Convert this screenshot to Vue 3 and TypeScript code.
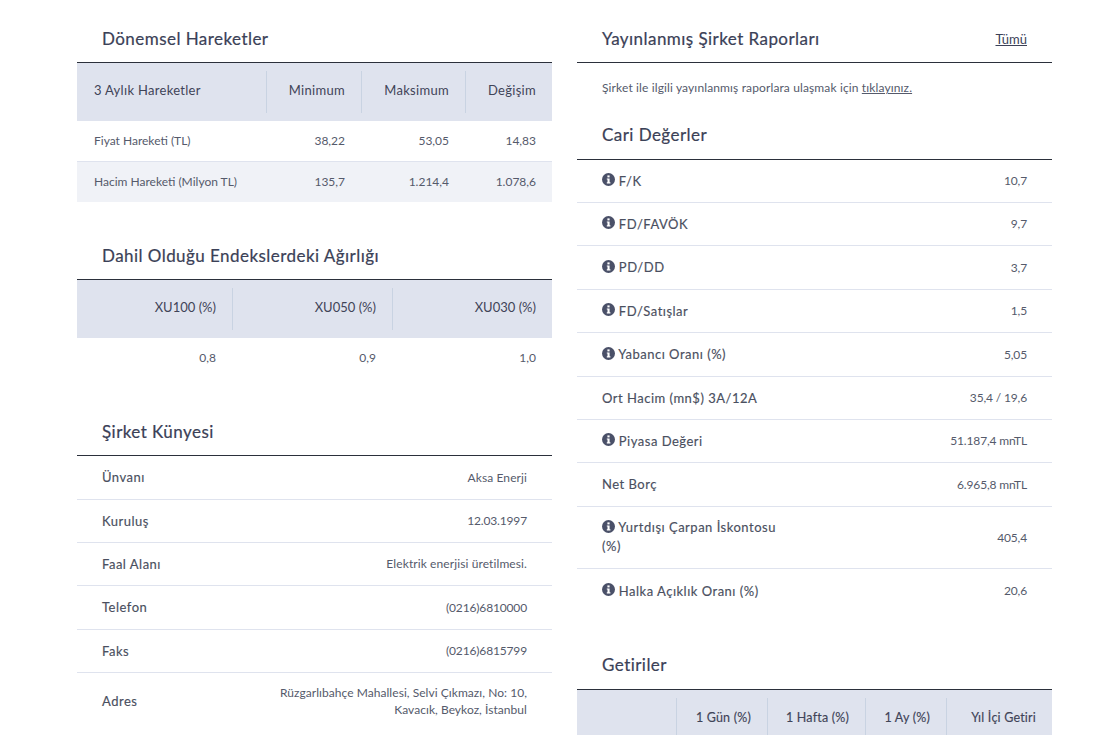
<script setup lang="ts">
const moves = [
  ['Fiyat Hareketi (TL)', '38,22', '53,05', '14,83'],
  ['Hacim Hareketi (Milyon TL)', '135,7', '1.214,4', '1.078,6'],
]
const identity = [
  { k: 'Ünvanı', v: 'Aksa Enerji', h: 44, txt: true },
  { k: 'Kuruluş', v: '12.03.1997', h: 43, txt: false },
  { k: 'Faal Alanı', v: 'Elektrik enerjisi üretilmesi.', h: 43, txt: true },
  { k: 'Telefon', v: '(0216)6810000', h: 44, txt: false },
  { k: 'Faks', v: '(0216)6815799', h: 43, txt: false },
]
const current = [
  { k: 'F/K', v: '10,7', i: true, h: 43 },
  { k: 'FD/FAVÖK', v: '9,7', i: true, h: 43 },
  { k: 'PD/DD', v: '3,7', i: true, h: 44 },
  { k: 'FD/Satışlar', v: '1,5', i: true, h: 43 },
  { k: 'Yabancı Oranı (%)', v: '5,05', i: true, h: 44 },
  { k: 'Ort Hacim (mn$) 3A/12A', v: '35,4 / 19,6', i: false, h: 43 },
  { k: 'Piyasa Değeri', v: '51.187,4 mnTL', i: true, h: 43 },
  { k: 'Net Borç', v: '6.965,8 mnTL', i: false, h: 44 },
]
</script>

<template>
  <div class="page">
    <div class="col">
      <h2 class="title">Dönemsel Hareketler</h2>
      <div class="thead moves">
        <div class="th left">3 Aylık Hareketler</div>
        <div class="th">Minimum</div>
        <div class="th">Maksimum</div>
        <div class="th last">Değişim</div>
      </div>
      <div v-for="r in moves" :key="r[0]" class="trow moves">
        <div class="td left">{{ r[0] }}</div>
        <div class="td">{{ r[1] }}</div>
        <div class="td">{{ r[2] }}</div>
        <div class="td last">{{ r[3] }}</div>
      </div>

      <h2 class="title second">Dahil Olduğu Endekslerdeki Ağırlığı</h2>
      <div class="thead weights">
        <div class="th">XU100 (%)</div>
        <div class="th">XU050 (%)</div>
        <div class="th last">XU030 (%)</div>
      </div>
      <div class="trow weights plain">
        <div class="td">0,8</div>
        <div class="td">0,9</div>
        <div class="td last">1,0</div>
      </div>

      <h2 class="title third">Şirket Künyesi</h2>
      <div v-for="r in identity" :key="r.k" class="kv" :style="{ height: r.h + 'px' }">
        <span class="key">{{ r.k }}</span>
        <span class="val" :class="{ txt: r.txt }">{{ r.v }}</span>
      </div>
      <div class="kv address">
        <span class="key">Adres</span>
        <span class="val addr">Rüzgarlıbahçe Mahallesi, Selvi Çıkmazı, No: 10, Kavacık, Beykoz, İstanbul</span>
      </div>
    </div>

    <div class="col">
      <div class="title split">
        <h2>Yayınlanmış Şirket Raporları</h2>
        <a class="all">Tümü</a>
      </div>
      <p class="note">Şirket ile ilgili yayınlanmış raporlara ulaşmak için <a>tıklayınız.</a></p>
      <h2 class="title cari">Cari Değerler</h2>
      <div v-for="r in current" :key="r.k" class="kv" :style="{ height: r.h + 'px' }">
        <span class="key">
          <svg v-if="r.i" class="info" viewBox="0 0 13 13" aria-hidden="true">
            <circle cx="6.5" cy="6.5" r="6.5" fill="#4a5068" />
            <rect x="5.4" y="2.4" width="2.2" height="2" fill="#fff" />
            <path d="M4.8 5.4h2.8v3.9h.8v1.2H4.8V9.3h.7V6.6h-.7z" fill="#fff" />
          </svg>
          {{ r.k }}
        </span>
        <span class="val">{{ r.v }}</span>
      </div>
      <div class="kv tall">
        <span class="key wrap">
          <svg class="info" viewBox="0 0 13 13" aria-hidden="true">
            <circle cx="6.5" cy="6.5" r="6.5" fill="#4a5068" />
            <rect x="5.4" y="2.4" width="2.2" height="2" fill="#fff" />
            <path d="M4.8 5.4h2.8v3.9h.8v1.2H4.8V9.3h.7V6.6h-.7z" fill="#fff" />
          </svg>
          Yurtdışı Çarpan İskontosu (%)
        </span>
        <span class="val">405,4</span>
      </div>
      <div class="kv lastrow">
        <span class="key">
          <svg class="info" viewBox="0 0 13 13" aria-hidden="true">
            <circle cx="6.5" cy="6.5" r="6.5" fill="#4a5068" />
            <rect x="5.4" y="2.4" width="2.2" height="2" fill="#fff" />
            <path d="M4.8 5.4h2.8v3.9h.8v1.2H4.8V9.3h.7V6.6h-.7z" fill="#fff" />
          </svg>
          Halka Açıklık Oranı (%)
        </span>
        <span class="val">20,6</span>
      </div>
      <h2 class="title getiri">Getiriler</h2>
      <div class="thead returns">
        <div class="th"></div>
        <div class="th b">1 Gün (%)</div>
        <div class="th b">1 Hafta (%)</div>
        <div class="th b">1 Ay (%)</div>
        <div class="th last b">Yıl İçi Getiri</div>
      </div>
    </div>
  </div>
</template>

<style>
html, body { margin: 0; background: #fff; overflow: hidden; }
</style>

<style scoped>
.page {
  display: grid;
  grid-template-columns: 475px 475px;
  column-gap: 25px;
  padding-left: 77px;
  height: 735px;
  overflow: hidden;
  font-family: "Lato", "Liberation Sans", sans-serif;
  color: #4a4f60;
}
.col { min-width: 0; }
h2 { margin: 0; font: inherit; }
.title {
  box-sizing: border-box;
  height: 63px;
  padding: 15px 25px 0;
  display: flex;
  align-items: center;
  border-bottom: 1px solid #2b303b;
  font-size: 17px;
  letter-spacing: 0.45px;
  color: #3b4157;
  -webkit-text-stroke: 0.2px #3b4157;
}
.split { justify-content: space-between; }
.all {
  font-size: 13px;
  letter-spacing: 0;
  -webkit-text-stroke: 0;
  text-decoration: underline;
  color: #3b4157;
}
.second, .third { margin-top: 36px; height: 42px; padding-top: 0; padding-bottom: 6px; }
.cari { height: 47px; padding-top: 0; padding-bottom: 3px; }
.getiri { height: 43px; margin-top: 34px; padding-top: 0; padding-bottom: 7px; }
.thead {
  display: grid;
  height: 58px;
  align-items: center;
  background: #dfe3ee;
  font-size: 13px;
  letter-spacing: 0.15px;
  color: #3f4458;
}
.thead.moves { letter-spacing: 0.3px; }
.thead.weights { letter-spacing: 0; }
.trow {
  display: grid;
  align-items: center;
  font-size: 12px;
  line-height: 13px;
  padding-bottom: 2px;
  height: 38px;
  border-bottom: 1px solid #dfe3ee;
  background: #fff;
  color: #555a6b;
}
.trow + .trow { background: #f0f2f7; border-bottom: 0; }
.moves { grid-template-columns: 190px 95px 104px 86px; }
.weights { grid-template-columns: 156px 160px 159px; }
.returns { grid-template-columns: 100px 91px 98px 81px 105px; }
.th {
  box-sizing: border-box;
  height: 42px;
  line-height: 39px;
  text-align: right;
  padding-right: 16px;
  border-right: 1px solid #c9d3e2;
  white-space: nowrap;
}
.th.last { border-right: 0; }
.th.b { font-size: 12.5px; letter-spacing: 0.2px; -webkit-text-stroke: 0.15px #3f4458; }
.th.left, .td.left { text-align: left; padding-left: 17px; }
.td { text-align: right; padding-right: 17px; white-space: nowrap; }
.td.last { padding-right: 16px; }
.plain { border-bottom: 0; }
.kv {
  box-sizing: border-box;
  display: flex;
  justify-content: space-between;
  align-items: center;
  padding: 0 25px 1px;
  border-bottom: 1px solid #dfe3ee;
  font-size: 13px;
}
.key {
  letter-spacing: 0.5px;
  color: #4a4f60;
  white-space: nowrap;
  -webkit-text-stroke: 0.15px #4a4f60;
}
.val { font-size: 12px; letter-spacing: -0.15px; color: #555a6b; }
.val.txt { letter-spacing: 0.1px; }
.addr { width: 255px; text-align: right; line-height: 17px; letter-spacing: 0.05px; }
.address { height: 58px; border-bottom: 0; padding-bottom: 3px; }
.info { width: 13px; height: 13px; vertical-align: -0.5px; }
.note {
  margin: 0;
  height: 49px;
  padding: 0 25px 1px;
  display: flex;
  align-items: center;
  font-size: 12px;
  letter-spacing: 0.13px;
  color: #555a6b;
  white-space: pre-wrap;
}
.note a { text-decoration: underline; }
.tall { height: 62px; }
.wrap { width: 190px; white-space: normal; line-height: 19px; }
.lastrow { height: 44px; border-bottom: 0; }
</style>
